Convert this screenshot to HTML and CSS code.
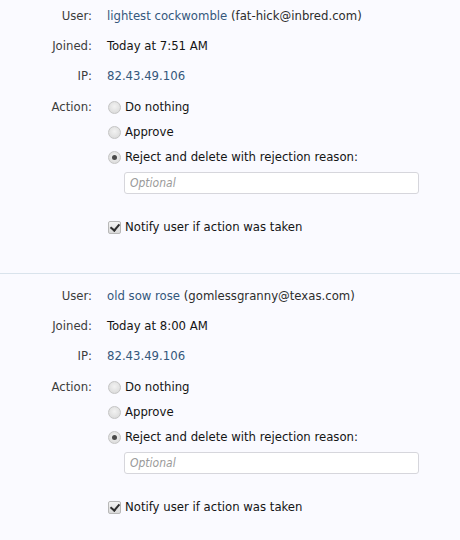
FILE: index.html
```html
<!DOCTYPE html>
<html>
<head>
<meta charset="utf-8">
<link rel="stylesheet" href="styles.css">
</head>
<body>
<div class="block">
  <div class="row"><div class="lbl">User:</div><div class="val"><a class="link">lightest cockwomble</a> <span class="muted">(fat-hick@inbred.com)</span></div></div>
  <div class="row"><div class="lbl">Joined:</div><div class="val">Today at 7:51 AM</div></div>
  <div class="row"><div class="lbl">IP:</div><div class="val"><a class="link">82.43.49.106</a></div></div>
  <div class="row action"><div class="lbl">Action:</div>
    <div class="val">
      <ul class="opts">
        <li><label><input type="radio" name="a1"> Do nothing</label></li>
        <li><label><input type="radio" name="a1"> Approve</label></li>
        <li><label><input type="radio" name="a1" checked> Reject and delete with rejection reason:</label>
          <input type="text" class="reason" placeholder="Optional"></li>
      </ul>
      <label class="notify"><input type="checkbox" checked> Notify user if action was taken</label>
    </div>
  </div>
</div>
<div class="block">
  <div class="row"><div class="lbl">User:</div><div class="val"><a class="link">old sow rose</a> <span class="muted">(gomlessgranny@texas.com)</span></div></div>
  <div class="row"><div class="lbl">Joined:</div><div class="val">Today at 8:00 AM</div></div>
  <div class="row"><div class="lbl">IP:</div><div class="val"><a class="link">82.43.49.106</a></div></div>
  <div class="row action"><div class="lbl">Action:</div>
    <div class="val">
      <ul class="opts">
        <li><label><input type="radio" name="a2"> Do nothing</label></li>
        <li><label><input type="radio" name="a2"> Approve</label></li>
        <li><label><input type="radio" name="a2" checked> Reject and delete with rejection reason:</label>
          <input type="text" class="reason" placeholder="Optional"></li>
      </ul>
      <label class="notify"><input type="checkbox" checked> Notify user if action was taken</label>
    </div>
  </div>
</div>
</body>
</html>
```
FILE: styles.css
```css
html, body {
  margin: 0;
  padding: 0;
  background: #fafaff;
}
body {
  font-family: "DejaVu Sans Condensed", "DejaVu Sans", sans-serif;
  font-size: 13px;
  line-height: 18px;
  color: #141414;
}
.block {
  padding: 7px 0 37px;
  border-bottom: 1px solid #d9e3ec;
  display: flex;
  flex-direction: column;
  gap: 12px;
}
.block + .block {
  padding-top: 13px;
  border-bottom: none;
}
.row {
  display: grid;
  grid-template-columns: 92px 1fr;
  column-gap: 15px;
}
.row.action {
  margin-top: 1px;
}
.lbl {
  text-align: right;
  color: #3c3c3c;
}
.link {
  color: #34577c;
  text-decoration: none;
}
.muted {
  color: #2d2d2d;
}
.opts {
  list-style: none;
  margin: 0;
  padding: 0;
  display: flex;
  flex-direction: column;
  gap: 7px;
}
.opts label, .notify {
  display: flex;
  align-items: center;
  gap: 4px;
}
input[type=radio] {
  appearance: none;
  margin: 0 0 0 1px;
  width: 13px;
  height: 13px;
  border-radius: 50%;
  border: 1px solid #c4c4c4;
  background: radial-gradient(circle at 50% 40%, #f2f2f2 0%, #d6d6d6 100%);
  position: relative;
  flex: none;
}
input[type=radio]:checked::after {
  content: "";
  position: absolute;
  left: 3px;
  top: 3px;
  width: 5px;
  height: 5px;
  border-radius: 50%;
  background: #4a4a4a;
}
input[type=checkbox] {
  appearance: none;
  margin: 0 0 0 1px;
  width: 13px;
  height: 13px;
  border-radius: 2px;
  border: 1px solid #b8b8b8;
  background: linear-gradient(#f4f4f4, #d9d9d9);
  position: relative;
  flex: none;
}
input[type=checkbox]:checked::after {
  content: "";
  position: absolute;
  left: 3px;
  top: 0px;
  width: 4px;
  height: 7px;
  border: solid #2e2e2e;
  border-width: 0 2px 2px 0;
  transform: rotate(40deg);
}
.reason {
  display: block;
  box-sizing: border-box;
  margin: 6px 0 0 17px;
  width: 295px;
  height: 22px;
  border: 1px solid #d6d6dc;
  border-radius: 3px;
  background: #fff;
  padding: 0 5px;
  font: italic 12px "DejaVu Sans Condensed", "DejaVu Sans", sans-serif;
}
.reason::placeholder {
  color: #9a9a9a;
}
.notify {
  margin-top: 24px;
}
```
